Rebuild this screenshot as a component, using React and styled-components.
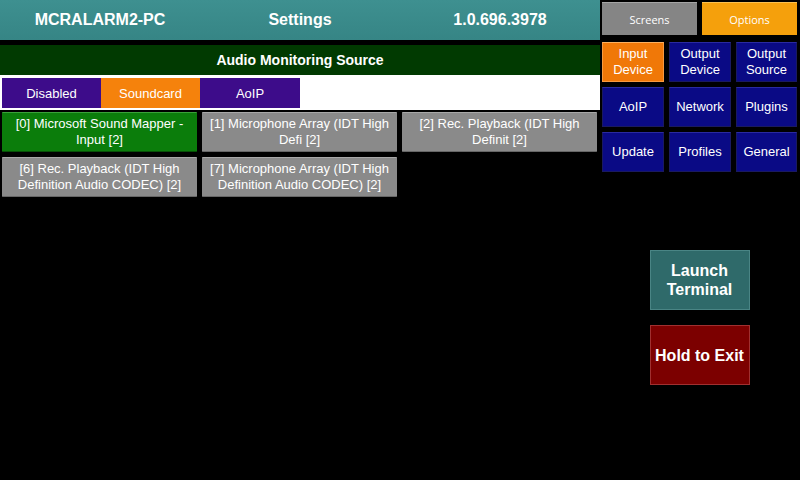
import React from "react";
import styled, { createGlobalStyle } from "styled-components";

const GlobalStyle = createGlobalStyle`
  html, body {
    margin: 0;
    padding: 0;
    background: #000;
  }
  body {
    font-family: "Liberation Sans", Arial, sans-serif;
  }
`;

const Screen = styled.div`
  width: 800px;
  height: 480px;
  background: #000;
  display: flex;
  gap: 2px;
  overflow: hidden;
`;

const LeftPane = styled.div`
  width: 600px;
  display: flex;
  flex-direction: column;
`;

const Header = styled.div`
  height: 40px;
  background: linear-gradient(#3e9090, #368585);
  display: grid;
  grid-template-columns: repeat(3, 1fr);
  align-items: center;
  color: #fff;
  font-weight: bold;
  font-size: 16px;
  text-align: center;
`;

const SectionBar = styled.div`
  margin-top: 5px;
  height: 30px;
  background: #013a01;
  color: #fff;
  font-weight: bold;
  font-size: 14px;
  display: flex;
  align-items: center;
  justify-content: center;
`;

const TabStrip = styled.div`
  background: #fff;
  height: 35px;
  padding: 3px 0 0 2px;
  box-sizing: border-box;
  display: flex;
`;

const Tab = styled.div`
  width: ${(p) => p.$w}px;
  height: 30px;
  background: ${(p) => (p.$active ? "#f5820c" : "#3d0c8a")};
  color: #fff;
  font-size: 13px;
  display: flex;
  align-items: center;
  justify-content: center;
`;

const DeviceGrid = styled.div`
  display: grid;
  grid-template-columns: repeat(3, 195px);
  grid-auto-rows: 40px;
  gap: 5px;
  padding: 2px 0 0 2px;
`;

const DeviceButton = styled.div`
  background: ${(p) => (p.$active ? "#0b7d0b" : "#8a8a8a")};
  border-top: 1px solid ${(p) => (p.$active ? "#3aa03a" : "#a8a8a8")};
  border-bottom: 1px solid ${(p) => (p.$active ? "#065006" : "#666")};
  box-sizing: border-box;
  border-radius: 1px;
  color: #fff;
  font-size: 13px;
  line-height: 16px;
  text-align: center;
  display: flex;
  align-items: center;
  justify-content: center;
  padding: 0 3px;
`;

const RightPane = styled.div`
  width: 195px;
  display: flex;
  flex-direction: column;
  padding-top: 2px;
`;

const ModeRow = styled.div`
  display: flex;
  gap: 5px;
`;

const ModeButton = styled.div`
  width: 95px;
  height: 33px;
  background: ${(p) => (p.$active ? "#f5a00c" : "#858585")};
  border-top: 1px solid ${(p) => (p.$active ? "#fbc050" : "#a5a5a5")};
  box-sizing: border-box;
  color: #fff;
  font-family: "Open Sans", "DejaVu Sans", sans-serif;
  font-size: 11px;
  display: flex;
  align-items: center;
  justify-content: center;
`;

const MenuGrid = styled.div`
  margin-top: 7px;
  display: grid;
  grid-template-columns: 62px 62px 61px;
  grid-auto-rows: 40px;
  gap: 5px;
`;

const MenuButton = styled.div`
  background: ${(p) => (p.$active ? "#f07808" : "#0a0a85")};
  border: 1px solid ${(p) => (p.$active ? "#f89a40" : "#1a1a60")};
  border-top-color: ${(p) => (p.$active ? "#fbb060" : "#2a2aa0")};
  box-sizing: border-box;
  color: #fff;
  font-size: 13px;
  line-height: 16px;
  text-align: center;
  display: flex;
  align-items: center;
  justify-content: center;
`;

const ActionStack = styled.div`
  margin-top: 78px;
  display: flex;
  flex-direction: column;
  align-items: center;
  gap: 15px;
`;

const ActionButton = styled.div`
  width: 100px;
  height: 60px;
  background: ${(p) => p.$bg};
  border: 1px solid ${(p) => p.$edge};
  box-sizing: border-box;
  color: #fff;
  font-weight: bold;
  font-size: 16px;
  line-height: 19px;
  text-align: center;
  display: flex;
  align-items: center;
  justify-content: center;
`;

const devices = [
  { label: "[0] Microsoft Sound Mapper - Input [2]", active: true },
  { label: "[1] Microphone Array (IDT High Defi [2]" },
  { label: "[2] Rec. Playback (IDT High Definit [2]" },
  { label: "[6] Rec. Playback (IDT High Definition Audio CODEC) [2]" },
  { label: "[7] Microphone Array (IDT High Definition Audio CODEC) [2]" },
];

const menu = [
  { label: "Input Device", active: true },
  { label: "Output Device" },
  { label: "Output Source" },
  { label: "AoIP" },
  { label: "Network" },
  { label: "Plugins" },
  { label: "Update" },
  { label: "Profiles" },
  { label: "General" },
];

export default function App() {
  return (
    <>
      <GlobalStyle />
      <Screen>
        <LeftPane>
          <Header>
            <span>MCRALARM2-PC</span>
            <span>Settings</span>
            <span>1.0.696.3978</span>
          </Header>
          <SectionBar>Audio Monitoring Source</SectionBar>
          <TabStrip>
            <Tab $w={99}>Disabled</Tab>
            <Tab $w={99} $active>
              Soundcard
            </Tab>
            <Tab $w={100}>AoIP</Tab>
          </TabStrip>
          <DeviceGrid>
            {devices.map((d) => (
              <DeviceButton key={d.label} $active={d.active}>
                {d.label}
              </DeviceButton>
            ))}
          </DeviceGrid>
        </LeftPane>
        <RightPane>
          <ModeRow>
            <ModeButton>Screens</ModeButton>
            <ModeButton $active>Options</ModeButton>
          </ModeRow>
          <MenuGrid>
            {menu.map((m) => (
              <MenuButton key={m.label} $active={m.active}>
                {m.label}
              </MenuButton>
            ))}
          </MenuGrid>
          <ActionStack>
            <ActionButton $bg="#2f6a6a" $edge="#4a8585">
              Launch
              <br />
              Terminal
            </ActionButton>
            <ActionButton $bg="#7c0000" $edge="#a03030">
              Hold to Exit
            </ActionButton>
          </ActionStack>
        </RightPane>
      </Screen>
    </>
  );
}
